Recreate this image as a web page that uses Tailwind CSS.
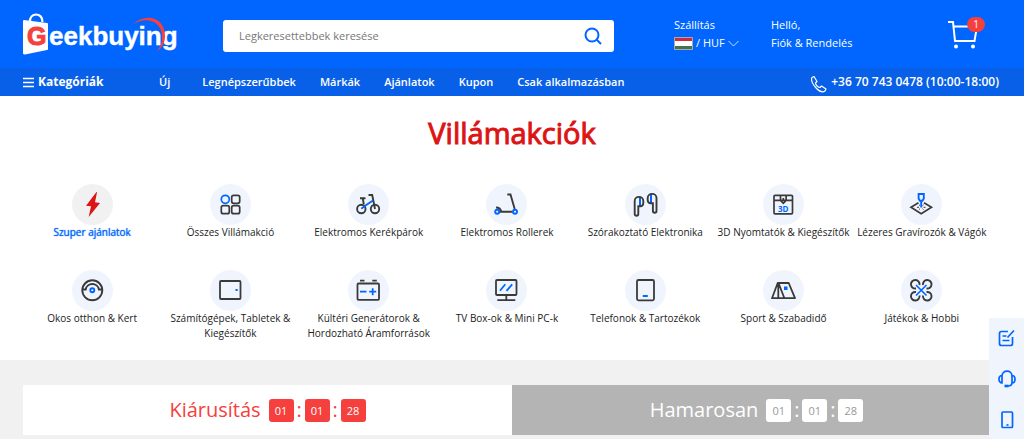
<!DOCTYPE html>
<html lang="hu">
<head>
  <meta charset="UTF-8">
  <meta name="viewport" content="width=device-width, initial-scale=1">
  <title>Villámakciók - Geekbuying</title>
  <script src="https://cdn.jsdelivr.net/npm/@tailwindcss/browser@4"></script>
</head>
<body class="bg-white font-['Open_Sans','Noto_Sans',sans-serif] text-[#222] overflow-x-hidden">

  <!-- header -->
  <header class="bg-[#0066ff] text-white">
    <div class="flex items-center h-[68px] pl-[23px] pr-[39px]">
      <a href="#" class="w-[200px] shrink-0" aria-label="Geekbuying">
        <svg width="156" height="44" viewBox="0 0 156 44" fill="none">
          <path d="M7 10C6 0 20 0 19.500 10" stroke="#fff" stroke-width="2.200"/>
          <path d="M1 8l23 3q1 0 1 1v25q0 1-1 1L2 42.500q-2 0-2-1V9q0-1 1-1z" fill="#fff"/>
          <text x="4" y="33" font-family="Liberation Sans, sans-serif" font-weight="700" font-size="25" fill="#f5403d" stroke="#f5403d">G</text>
          <text x="26" y="33" font-family="Liberation Sans, sans-serif" font-weight="700" font-size="26" fill="#fff" stroke="#fff" stroke-width=".4">eekbuying</text>
          <path d="M110 12C124 0 142 6 142 24c0 7-3 12-8 15 4-5 6-10 5-17C137 9 124 4 110 12z" fill="#f5403d"/>
        </svg>
      </a>
      <form class="flex flex-1 h-8 mt-1 bg-white rounded-[3px]">
        <input type="search" aria-label="Keresés" placeholder="Legkeresettebbek keresése" class="flex-1 min-w-0 px-4 text-[11px] text-[#333] placeholder:text-[#777] outline-none">
        <button class="w-[42px] flex items-center justify-center" aria-label="Keresés indítása">
          <svg width="18" height="18" viewBox="0 0 18 18" fill="none" stroke="#0066ff" stroke-width="2"><circle cx="8" cy="8" r="6.500"/><path d="M12.500 12.500L17 17"/></svg>
        </button>
      </form>
      <div class="ml-[60px] w-[97px] text-[11px] leading-[18px]">
        <div>Szállítás</div>
        <button class="flex items-center gap-[3px]">
          <svg width="19" height="13" viewBox="0 0 19 13"><path fill="#ce2b41" d="M0 0h19v5H0z"/><path fill="#fff" d="M0 4h19v5H0z"/><path fill="#477050" d="M0 9h19v4H0z"/><path d="M.5.5h18v12H.5z" fill="none" stroke="#aaa"/></svg>
          / HUF
          <svg width="11" height="7" viewBox="0 0 11 7" fill="none" stroke="#fff" stroke-width=".8"><path d="M.5 1l5 5 5-5"/></svg>
        </button>
      </div>
      <a href="#" class="w-[177px] text-[11px] leading-[18px]">Helló,<br>Fiók &amp; Rendelés</a>
      <a href="#" class="relative w-[37px] h-[34px]" aria-label="Kosár">
        <svg width="30" height="34" viewBox="0 0 30 34" fill="none" stroke="#fff" stroke-width="2"><path d="M0 5h5l2 19h19.500l2.500-14.500H6"/><path d="M8 29.500h.01M25 29.500h.01" stroke-width="4" stroke-linecap="round"/></svg>
        <span class="absolute right-0 top-0 w-[18px] h-[15px] rounded-full bg-[#f5403d] text-[10px] leading-[15px] text-center">1</span>
      </a>
    </div>

    <nav class="flex items-center h-[28px] pl-[23px] pr-[25px] bg-[#0860e8] text-[11px] font-semibold whitespace-nowrap">
      <button class="flex items-center gap-1 w-[136px] text-xs font-bold">
        <svg width="11" height="11" viewBox="0 0 11 11" stroke="#fff"><path d="M0 1.500h11M0 5.500h11M0 9.500h11" stroke-width="1.500"/></svg>
        Kategóriák
      </button>
      <div class="flex gap-6">
        <a href="#" class="mr-2">Új</a>
        <a href="#">Legnépszerűbbek</a>
        <a href="#">Márkák</a>
        <a href="#">Ajánlatok</a>
        <a href="#">Kupon</a>
        <a href="#">Csak alkalmazásban</a>
      </div>
      <a href="tel:+36707430478" class="ml-auto flex items-center gap-1 text-xs">
        <svg class="mt-1" width="17" height="17" viewBox="0 0 17 17" fill="none" stroke="#fff" stroke-width="1.200"><path d="M2 1.500l2-1 3 5-1.500 1.500c0 2 2.500 4.500 4.500 4.500l1.500-1.500 4.500 3-1 2c-2 1.500-5 1-8.500-2.500S.5 4 2 1.500z" stroke-linejoin="round"/></svg>
        +36 70 743 0478 (10:00-18:00)
      </a>
    </nav>
  </header>

  <!-- flash deals -->
  <main>
    <h1 class="pt-[17px] text-[29px] leading-[40px] font-normal [-webkit-text-stroke:1px_#dc1414] text-center text-[#dc1414]">Villámakciók</h1>

    <ul class="grid grid-cols-7 gap-y-[16px] pl-[23px] pr-[33px] pt-[31px] text-[10px] leading-[15px] text-center text-[#222]">
      <li>
        <a href="#" class="flex flex-col items-center h-[70px] text-[#0066ff] [text-shadow:0_0_1px_#0066ff]">
          <svg class="size-[41px] rounded-full bg-[#f1f1f1]" viewBox="0 0 41 41"><path d="M24.500 8L14 21.700l5 .5-2.300 10.800L28 19l-5-.7 2-10z" fill="#dc1414"/></svg>
          <span>Szuper ajánlatok</span>
        </a>
      </li>
      <li>
        <a href="#" class="flex flex-col items-center">
          <svg class="size-[41px] rounded-full bg-[#f0f5fd]" viewBox="0 0 41 41" fill="none" stroke="#3a3a3a" stroke-width="1.700"><circle cx="15.300" cy="15.300" r="4" stroke="#0066ff"/><rect x="21.700" y="11.300" width="8" height="8" rx="2"/><rect x="11.300" y="21.700" width="8" height="8" rx="2"/><rect x="21.700" y="21.700" width="8" height="8" rx="2"/></svg>
          <span>Összes Villámakció</span>
        </a>
      </li>
      <li>
        <a href="#" class="flex flex-col items-center">
          <svg class="size-[41px] rounded-full bg-[#f0f5fd]" viewBox="0 0 41 41" fill="none" stroke="#3a3a3a" stroke-width="1.900"><circle cx="13.300" cy="25" r="4.200"/><circle cx="27" cy="25" r="4.200"/><path d="M12 14.300h5.500M14.800 14.500l1 6M20.500 11h3.700L27 25"/><path d="M13.300 24.700l4.200-3.200L25 16.500" stroke="#0066ff"/></svg>
          <span>Elektromos Kerékpárok</span>
        </a>
      </li>
      <li>
        <a href="#" class="flex flex-col items-center">
          <svg class="size-[41px] rounded-full bg-[#f0f5fd]" viewBox="0 0 41 41" fill="none" stroke="#3a3a3a" stroke-width="1.900"><path d="M21.300 10.500h3.200l4.200 14.500M14 27.700h12.500M10 23.500c3 0 4.500 1.200 5 3.500"/><circle cx="11.200" cy="27.700" r="2" stroke="#0066ff"/><circle cx="29" cy="27.700" r="2" stroke="#0066ff"/></svg>
          <span>Elektromos Rollerek</span>
        </a>
      </li>
      <li>
        <a href="#" class="flex flex-col items-center">
          <svg class="size-[41px] rounded-full bg-[#f0f5fd]" viewBox="0 0 41 41" fill="none" stroke="#3a3a3a" stroke-width="1.900"><path d="M15 13v9M26 10v9" stroke="#0066ff" stroke-width="2"/><path d="M13.300 22.200V30c0 2.300-3.600 2.300-3.600 0V17c0-5.500 8.600-5.500 8.600 0v2c0 2-1 3.200-3 3.200h-2zM27.900 19.200V27c0 2.300 3.600 2.300 3.600 0V14c0-5.500-8.800-5.500-8.800 0v2c0 2 1 3.200 3 3.200h2.200z"/></svg>
          <span>Szórakoztató Elektronika</span>
        </a>
      </li>
      <li>
        <a href="#" class="flex flex-col items-center whitespace-nowrap">
          <svg class="size-[41px] rounded-full bg-[#f0f5fd]" viewBox="0 0 41 41" fill="none" stroke="#3a3a3a" stroke-width="1.700"><rect x="11" y="11.300" width="18.500" height="18.500" rx="1"/><path d="M11 16.300h18.500M17.500 12v4.300l2.800 3 2.800-3V12M20.300 14v3"/><text x="20.300" y="28" text-anchor="middle" font-family="Open Sans, sans-serif" font-size="8" font-weight="700" fill="#0066ff" stroke="none">3D</text></svg>
          <span>3D Nyomtatók &amp; Kiegészítők</span>
        </a>
      </li>
      <li>
        <a href="#" class="flex flex-col items-center whitespace-nowrap">
          <svg class="size-[41px] rounded-full bg-[#f0f5fd]" viewBox="0 0 41 41" fill="none" stroke="#3a3a3a" stroke-width="1.700"><path d="M17.500 18.700L10 23.300 20.200 29.800 30.500 23.300 23 18.700"/><path d="M16 23.300h2M22.500 23.300h2M18 20.800l1 .8M22.500 20.800l-1 .8M18 25.500l1-.8M22.500 25.500l-1-.8" stroke-width="1"/><path d="M17.600 10h5.200v4.500l-1.300 2.300h-2.600l-1.300-2.300zM20.200 17v6.500" stroke="#0066ff" stroke-width="1.900"/></svg>
          <span>Lézeres Gravírozók &amp; Vágók</span>
        </a>
      </li>

      <li>
        <a href="#" class="flex flex-col items-center">
          <svg class="size-[41px] rounded-full bg-[#f0f5fd]" viewBox="0 0 41 41" fill="none" stroke="#3a3a3a" stroke-width="1.900"><circle cx="20.300" cy="20.300" r="10"/><path d="M10.500 19.500h3.200c1-7.300 12.200-7.300 13.200 0h3.200"/><circle cx="20.300" cy="20.300" r="2" stroke="#0066ff"/></svg>
          <span>Okos otthon &amp; Kert</span>
        </a>
      </li>
      <li>
        <a href="#" class="flex flex-col items-center">
          <svg class="size-[41px] rounded-full bg-[#f0f5fd]" viewBox="0 0 41 41" fill="none" stroke="#3a3a3a" stroke-width="1.800"><rect x="10" y="11" width="20.500" height="18" rx="1"/><path d="M25.500 20h2.200" stroke="#0066ff" stroke-width="2.200"/></svg>
          <span>Számítógépek, Tabletek &amp;<br>Kiegészítők</span>
        </a>
      </li>
      <li>
        <a href="#" class="flex flex-col items-center">
          <svg class="size-[41px] rounded-full bg-[#f0f5fd]" viewBox="0 0 41 41" fill="none" stroke="#3a3a3a" stroke-width="1.800"><rect x="9.500" y="13.500" width="21.500" height="16.300" rx="1"/><path d="M12 10.700h4.500M24.300 10.700h4.500"/><path d="M12 21.700h6.500M21.200 21.700h7M24.700 18.200v7" stroke="#0066ff"/></svg>
          <span>Kültéri Generátorok &amp;<br>Hordozható Áramforrások</span>
        </a>
      </li>
      <li>
        <a href="#" class="flex flex-col items-center">
          <svg class="size-[41px] rounded-full bg-[#f0f5fd]" viewBox="0 0 41 41" fill="none" stroke="#3a3a3a" stroke-width="1.800"><rect x="10" y="10" width="20.500" height="15" rx="1"/><path d="M20.300 25v5M11.300 30.200h18"/><path d="M14 20.700l5.300-6.400M20.500 20.900l5.700-6.600" stroke="#0066ff"/></svg>
          <span>TV Box-ok &amp; Mini PC-k</span>
        </a>
      </li>
      <li>
        <a href="#" class="flex flex-col items-center">
          <svg class="size-[41px] rounded-full bg-[#f0f5fd]" viewBox="0 0 41 41" fill="none" stroke="#3a3a3a" stroke-width="1.800"><rect x="12" y="10" width="17" height="20.300" rx="1.500"/><path d="M17.800 26h5" stroke="#0066ff"/></svg>
          <span>Telefonok &amp; Tartozékok</span>
        </a>
      </li>
      <li>
        <a href="#" class="flex flex-col items-center">
          <svg class="size-[41px] rounded-full bg-[#f0f5fd]" viewBox="0 0 41 41" fill="none" stroke="#3a3a3a" stroke-width="1.800"><path d="M9 28.200L14.700 13h11L32 28.200zM15.300 13v15M15.500 13l5.800 15" stroke-linejoin="round"/><path d="M21 18.200h3.500" stroke="#0066ff" stroke-width="3.500"/></svg>
          <span>Sport &amp; Szabadidő</span>
        </a>
      </li>
      <li>
        <a href="#" class="flex flex-col items-center">
          <svg class="size-[41px] rounded-full bg-[#f0f5fd]" viewBox="0 0 41 41" fill="none" stroke="#3a3a3a" stroke-width="1.900"><path d="M15 18.500A4.300 4.300 0 1 1 18.500 15M22 15A4.300 4.300 0 1 1 25.500 18.500M25.500 22A4.300 4.300 0 1 1 22 25.500M18.500 25.500A4.300 4.300 0 1 1 15 22"/><path d="M15 15l10.500 10.500M25.500 15L15 25.500" stroke="#0066ff" stroke-width="1.600"/></svg>
          <span>Játékok &amp; Hobbi</span>
        </a>
      </li>
    </ul>

    <!-- countdown tabs -->
    <section class="mt-[19px] bg-[#f1f1f1] pt-[25px] pb-1 px-[23px]">
      <div class="grid grid-cols-2 h-[50px]">
        <button class="flex items-center justify-center bg-white text-[#f5403d] text-xl">
          <span class="mr-2">Kiárusítás</span>
          <span class="w-[25px] h-[23px] rounded-[3px] bg-[#f5403d] text-white text-[11px] leading-[23px]">01</span>
          <span class="w-[11px]">:</span>
          <span class="w-[25px] h-[23px] rounded-[3px] bg-[#f5403d] text-white text-[11px] leading-[23px]">01</span>
          <span class="w-[11px]">:</span>
          <span class="w-[25px] h-[23px] rounded-[3px] bg-[#f5403d] text-white text-[11px] leading-[23px]">28</span>
        </button>
        <button class="flex items-center justify-center bg-[#b4b4b4] text-white text-xl">
          <span class="mr-2">Hamarosan</span>
          <span class="w-[25px] h-[23px] rounded-[3px] bg-white text-[#999] text-[11px] leading-[23px]">01</span>
          <span class="w-[11px]">:</span>
          <span class="w-[25px] h-[23px] rounded-[3px] bg-white text-[#999] text-[11px] leading-[23px]">01</span>
          <span class="w-[11px]">:</span>
          <span class="w-[25px] h-[23px] rounded-[3px] bg-white text-[#999] text-[11px] leading-[23px]">28</span>
        </button>
      </div>
    </section>
  </main>

  <!-- side toolbar -->
  <aside class="fixed right-0 bottom-0 w-[35px] h-[121px] pt-[11px] flex flex-col items-center gap-[23px] bg-[#f0f5fd]">
    <button aria-label="Kérdőív">
      <svg width="18" height="18" viewBox="0 0 18 18" fill="none" stroke="#0066ff" stroke-width="1.700"><path d="M10 2.500H3.500q-2 0-2 2v10q0 2 2 2h9q2 0 2-2V8M4.500 7h4M4.500 11.500h7M9.500 8.500L16 1.500"/></svg>
    </button>
    <button aria-label="Ügyfélszolgálat">
      <svg width="18" height="18" viewBox="0 0 18 18" fill="none" stroke="#0066ff" stroke-width="1.700"><path d="M4 6c0-6.500 10-6.500 10 0M4 5.500v7.500c-4 0-4-7.500 0-7.500zM14 5.500v7.500c4 0 4-7.500 0-7.500zM14 12.500c0 2-1.500 3.500-4 3.500"/><path d="M6.500 16h4" stroke-width="2.600"/></svg>
    </button>
    <button aria-label="Mobilalkalmazás">
      <svg width="18" height="18" viewBox="0 0 18 18" fill="none" stroke="#0066ff" stroke-width="1.700"><rect x="4" y="1" width="10.500" height="15.500" rx="1"/><path d="M8.500 14h2"/></svg>
    </button>
  </aside>
</body>
</html>
